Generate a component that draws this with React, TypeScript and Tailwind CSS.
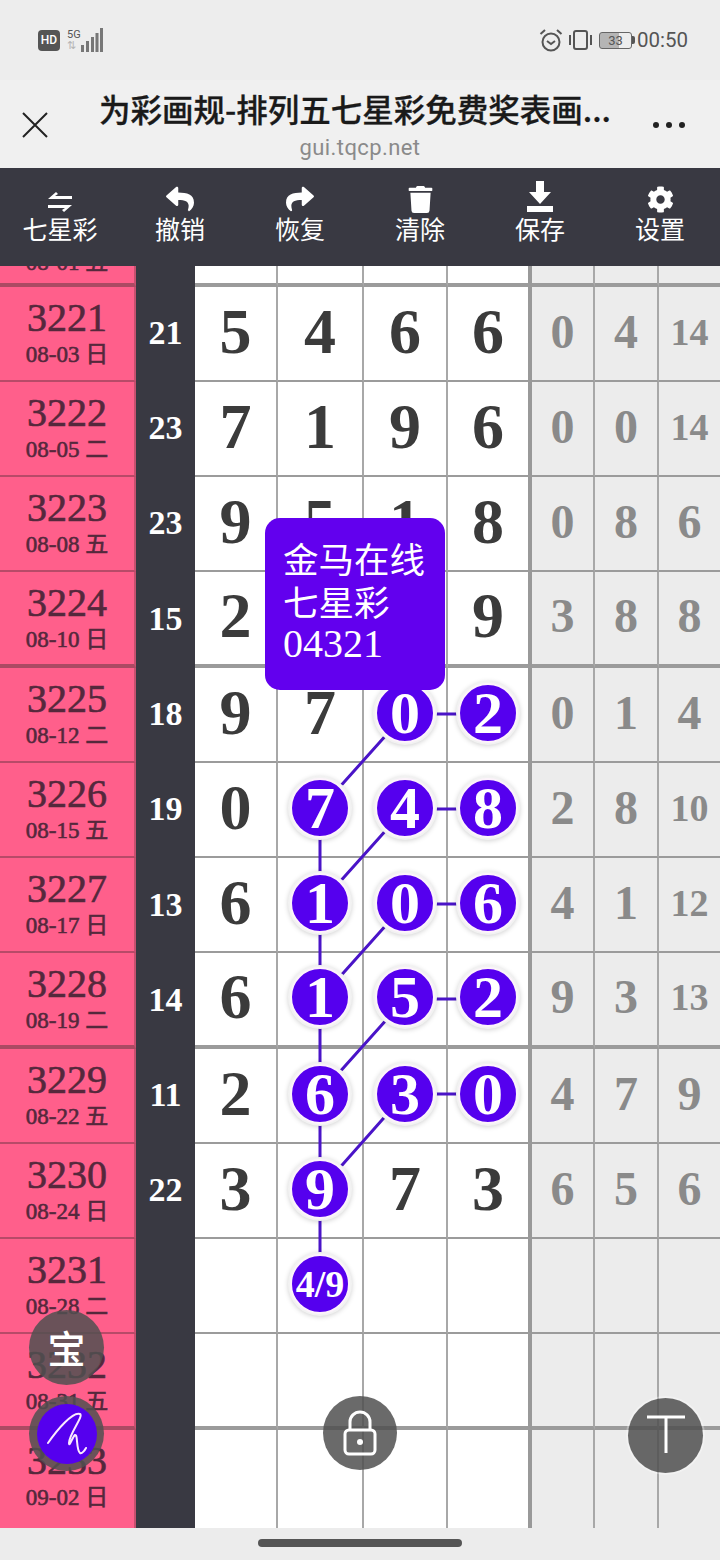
import React from "react";
import { FaReply, FaShare, FaTrash, FaCog } from "react-icons/fa";

const SERIF = "font-['Liberation_Serif','Noto_Sans_CJK_SC',serif]";
const CJK = "font-['Noto_Sans_CJK_SC','Noto_Sans',sans-serif]";

type Row = { id: string; date: string; n: string; d: (string | null)[]; g: string[]; balls?: number[]; thick?: boolean };

const rows: Row[] = [
  { id: "3221", date: "08-03 日", n: "21", d: ["5", "4", "6", "6"], g: ["0", "4", "14"] },
  { id: "3222", date: "08-05 二", n: "23", d: ["7", "1", "9", "6"], g: ["0", "0", "14"] },
  { id: "3223", date: "08-08 五", n: "23", d: ["9", "5", "1", "8"], g: ["0", "8", "6"] },
  { id: "3224", date: "08-10 日", n: "15", d: ["2", null, null, "9"], g: ["3", "8", "8"], thick: true },
  { id: "3225", date: "08-12 二", n: "18", d: ["9", "7", "0", "2"], g: ["0", "1", "4"], balls: [2, 3] },
  { id: "3226", date: "08-15 五", n: "19", d: ["0", "7", "4", "8"], g: ["2", "8", "10"], balls: [1, 2, 3] },
  { id: "3227", date: "08-17 日", n: "13", d: ["6", "1", "0", "6"], g: ["4", "1", "12"], balls: [1, 2, 3] },
  { id: "3228", date: "08-19 二", n: "14", d: ["6", "1", "5", "2"], g: ["9", "3", "13"], balls: [1, 2, 3], thick: true },
  { id: "3229", date: "08-22 五", n: "11", d: ["2", "6", "3", "0"], g: ["4", "7", "9"], balls: [1, 2, 3] },
  { id: "3230", date: "08-24 日", n: "22", d: ["3", "9", "7", "3"], g: ["6", "5", "6"], balls: [1] },
  { id: "3231", date: "08-28 二", n: "", d: [null, "4/9", null, null], g: ["", "", ""], balls: [1] },
  { id: "3232", date: "08-31 五", n: "", d: [null, null, null, null], g: ["", "", ""], thick: true },
  { id: "3233", date: "09-02 日", n: "", d: [null, null, null, null], g: ["", "", ""] },
];

const whiteW = ["w-[83px]", "w-[86px]", "w-[84px]", "w-[84px]"];
const grayW = ["w-[63px]", "w-[64px]", "w-[61px]"];

function Ball({ v }: { v: string }) {
  return (
    <div className={`relative z-20 flex h-[60px] w-[60px] items-center justify-center rounded-full border-[2px] border-[#fdf3fb] bg-[#5500ee] font-bold text-white shadow-[0_0_0_2px_#f2f2f2,0_1px_5px_2px_rgba(0,0,0,0.18)] ${SERIF} ${v.length > 1 ? "text-[38px]" : "text-[60px]"}`}>
      {v}
    </div>
  );
}

function TableRow({ r, last }: { r: Row; last: boolean }) {
  const hLine = last ? "" : r.thick ? "border-b-[4px]" : "border-b-[2px]";
  const h = last ? "h-[100px]" : r.thick ? "h-[95.5px]" : "h-[95.2px]";
  return (
    <div className={`flex ${h}`}>
      <div className={`box-border flex w-[136px] flex-col items-center pt-[7px] border-r-[2px] border-r-[#c8506f] bg-[#ff5f8b] text-[#55283c] ${hLine} ${r.thick ? "border-b-[#ab4a63]" : "border-b-[#b84a68]"} ${SERIF}`}>
        <div className="text-[40px] leading-[47px] [-webkit-text-stroke:0.6px_#55283c]">{r.id}</div>
        <div className="text-[23px] leading-[27px] whitespace-nowrap [-webkit-text-stroke:0.6px_#55283c]">{r.date}</div>
      </div>
      <div className={`box-border flex w-[59px] items-center justify-center bg-[#393942] pb-[3px] text-[34px] font-bold text-white ${SERIF}`}>{r.n}</div>
      {r.d.map((v, i) => (
        <div
          key={i}
          className={`box-border flex items-center justify-center bg-white pb-[3px] font-bold text-[#3b3b3b] ${whiteW[i]} ${hLine} border-b-[#9b9b9b] ${i === 3 ? "border-r-[4px] border-r-[#999999]" : "border-r-[2px] border-r-[#a8a8a8]"} ${SERIF} text-[64px] leading-none`}
        >
          {v !== null && (r.balls?.includes(i) ? <Ball v={v} /> : v)}
        </div>
      ))}
      {r.g.map((v, i) => (
        <div
          key={i}
          className={`box-border flex items-center justify-center bg-[#ececec] pb-[3px] font-bold text-[#8a8a8a] ${grayW[i]} ${hLine} border-b-[#9b9b9b] ${i < 2 ? "border-r-[2px] border-r-[#a8a8a8]" : ""} ${SERIF} ${v.length > 1 ? "text-[38px]" : "text-[48px]"} leading-none`}
        >
          {v}
        </div>
      ))}
    </div>
  );
}

function Tool({ icon, label }: { icon: React.ReactNode; label: string }) {
  return (
    <div className="flex w-[120px] flex-col items-center text-white">
      <div className="flex h-[32px] items-end justify-center">{icon}</div>
      <div className={`text-[25px] leading-[30px] ${CJK}`}>{label}</div>
    </div>
  );
}

export default function App() {
  const rowY = [714, 809, 904, 999, 1094, 1190, 1285];
  return (
    <div className="flex h-[1560px] w-[720px] flex-col overflow-hidden bg-[#ededed]">
      {/* status bar */}
      <div className="flex h-[80px] items-center justify-between pl-[38px] pr-[32px] text-[#555555]">
        <div className="flex items-center">
          <div className="flex h-[21px] w-[22px] items-center justify-center rounded-[4px] bg-[#555555] font-['Roboto',sans-serif] text-[12px] font-medium text-white">HD</div>
          <div className="ml-[7px] flex h-[23px] w-[15px] flex-col font-['Roboto',sans-serif] text-[11px] leading-[11px]">
            <span>5G</span>
            <span className="text-[#b5b5b5]">⇅</span>
          </div>
          <svg width="22" height="24" viewBox="0 0 22 24" className="-ml-[1px]">
            <rect x="0" y="17" width="3" height="7" fill="#777" />
            <rect x="5" y="13" width="3" height="11" fill="#777" />
            <rect x="10" y="9" width="3" height="15" fill="#777" />
            <rect x="14.5" y="5" width="3" height="19" fill="#777" />
            <rect x="19" y="0" width="3" height="24" fill="#777" />
          </svg>
        </div>
        <div className="flex items-center">
          <svg width="24" height="24" viewBox="0 0 24 24" fill="none" stroke="#555" strokeWidth="2">
            <circle cx="12" cy="14" r="8.5" />
            <path d="M8 13l4 3 4-3M1.5 6L6 2M22.5 6L18 2" />
          </svg>
          <svg width="26" height="22" viewBox="0 0 26 22" fill="none" stroke="#555" strokeWidth="2" className="ml-[5px]">
            <rect x="6" y="2" width="13" height="18" rx="2" />
            <path d="M2 6v10M23 6v10" />
          </svg>
          <div className="ml-[5px] flex h-[17px] w-[33px] items-center justify-center overflow-hidden rounded-[3px] border border-[#666666] bg-[linear-gradient(90deg,#b5b5b5_60%,#ededed_60%)] font-['Roboto',sans-serif] text-[13px] leading-none text-[#555555]">33</div>
          <div className="h-[8px] w-[3px] rounded-r-[2px] bg-[#555555]" />
          <div className="ml-[2px] font-['Roboto',sans-serif] text-[20.5px] leading-none text-[#555555]">00:50</div>
        </div>
      </div>

      {/* title bar */}
      <div className="flex h-[88px] items-start bg-[#f0f0f0]">
        <div className="flex h-[88px] w-[72px] shrink-0 items-center pl-[22px] pt-[2px]">
          <svg width="26" height="26" viewBox="0 0 26 26" stroke="#222" strokeWidth="2" fill="none"><path d="M1 1l24 24M25 1L1 25" /></svg>
        </div>
        <div className="flex flex-1 flex-col items-center pt-[9px]">
          <div className={`-ml-[10px] whitespace-nowrap text-[31.5px] font-medium leading-[38px] text-[#1a1a1a] [-webkit-text-stroke:0.3px_#1a1a1a] ${CJK}`}>为彩画规-排列五七星彩免费奖表画...</div>
          <div className="mt-[8px] font-['Roboto',sans-serif] text-[22px] leading-[26px] tracking-[0.4px] text-[#8a8a8a]">gui.tqcp.net</div>
        </div>
        <div className="flex h-[88px] w-[72px] shrink-0 items-center justify-start gap-[7px] pl-[5px] pt-[2px]">
          <span className="h-[6px] w-[6px] rounded-full bg-[#222222]" />
          <span className="h-[6px] w-[6px] rounded-full bg-[#222222]" />
          <span className="h-[6px] w-[6px] rounded-full bg-[#222222]" />
        </div>
      </div>

      {/* toolbar */}
      <div className="flex h-[98px] items-start bg-[#393942] pt-[13px]">
        <Tool
          label="七星彩"
          icon={
            <svg width="26" height="22" viewBox="0 0 26 22" fill="#fff">
              <path d="M9 1L1 8h24v-3H8l3-2zM17 21l8-7H1v3h17l-3 2z" />
            </svg>
          }
        />
        <Tool label="撤销" icon={<FaReply size={28} color="#fff" />} />
        <Tool label="恢复" icon={<FaShare size={28} color="#fff" />} />
        <Tool label="清除" icon={<FaTrash size={27} color="#fff" />} />
        <Tool
          label="保存"
          icon={
            <svg width="28" height="32" viewBox="0 0 28 32" fill="#fff">
              <path d="M10 0h8v11h7L14 23 3 11h7zM1 25h26v6H1z" />
            </svg>
          }
        />
        <Tool label="设置" icon={<FaCog size={27} color="#fff" />} />
      </div>

      {/* table */}
      <div className="relative h-[1262px] overflow-hidden">
        {/* partial row */}
        <div className="flex h-[20.5px]">
          <div className={`box-border flex w-[136px] justify-center overflow-hidden border-b-[4px] border-r-[2px] border-b-[#ab4a63] border-r-[#c8506f] bg-[#ff5f8b] text-[23px] leading-[26px] whitespace-nowrap text-[#55283c] [-webkit-text-stroke:0.6px_#55283c] ${SERIF}`}>
            <div className="-mt-[16px]">08-01 五</div>
          </div>
          <div className="w-[59px] bg-[#393942]" />
          {whiteW.map((w, i) => (
            <div key={i} className={`box-border border-b-[4px] border-b-[#9b9b9b] bg-white ${w} ${i === 3 ? "border-r-[4px] border-r-[#999999]" : "border-r-[2px] border-r-[#a8a8a8]"}`} />
          ))}
          {grayW.map((w, i) => (
            <div key={i} className={`box-border border-b-[4px] border-b-[#9b9b9b] bg-[#ececec] ${w} ${i < 2 ? "border-r-[2px] border-r-[#a8a8a8]" : ""}`} />
          ))}
        </div>
        {rows.map((r, i) => (
          <TableRow key={r.id} r={r} last={i === rows.length - 1} />
        ))}

        {/* connecting lines */}
        <svg className="absolute inset-0 z-10 h-[1262px] w-[720px]" viewBox="0 266 720 1262" fill="none" stroke="#4a14c8" strokeWidth="3">
          <path d={`M320 ${rowY[1]}V${rowY[6]}`} />
          {rowY.slice(0, 5).map((y, i) => (
            <path key={y} d={`M405 ${y}L320 ${rowY[i + 1]}M405 ${y}H488`} />
          ))}
        </svg>

        {/* tooltip */}
        <div className={`absolute left-[265px] top-[252px] z-30 flex h-[172px] w-[180px] flex-col rounded-[15px] bg-[#6200ee] pl-[18px] pt-[18px] text-white ${CJK}`}>
          <div className="text-[35.5px] leading-[43px]">金马在线</div>
          <div className="text-[35.5px] leading-[43px]">七星彩</div>
          <div className={`text-[40px] leading-[43px] ${SERIF}`}>04321</div>
        </div>

        {/* floating buttons */}
        <div className={`absolute left-[29px] top-[1044px] z-30 flex h-[75px] w-[75px] items-center justify-center rounded-full bg-[rgba(80,80,80,0.85)] pb-[2px] text-[38px] font-medium text-white ${CJK}`}>宝</div>
        <div className="absolute left-[29px] top-[1130px] z-30 flex h-[75px] w-[75px] items-center justify-center rounded-full bg-[rgba(80,80,80,0.85)]">
          <div className="flex h-[60px] w-[60px] items-center justify-center rounded-full bg-[#5500ee]">
            <svg width="44" height="44" viewBox="0 0 44 44" fill="none" stroke="#fbe9ff" strokeWidth="2" strokeLinecap="round" strokeLinejoin="round">
              <path d="M3 31C12 18 28-1 35 2C39 4 24 22 24 31C24 36 28 24 30 23C33 22 31 38 35 41C37 42 40 38 41 36" />
            </svg>
          </div>
        </div>
        <div className="absolute left-[323px] top-[1130px] z-30 flex h-[74px] w-[74px] items-center justify-center rounded-full bg-[rgba(80,80,80,0.85)]">
          <svg width="34" height="46" viewBox="0 0 34 46" fill="none" stroke="#fff" strokeWidth="3">
            <path d="M7 20v-8a10 10 0 0 1 20 0v8" />
            <rect x="2" y="20" width="30" height="24" rx="4" />
            <circle cx="17" cy="32" r="3" fill="#fff" stroke="none" />
          </svg>
        </div>
        <div className="absolute left-[628px] top-[1132px] z-30 flex h-[75px] w-[75px] items-center justify-center rounded-full bg-[rgba(80,80,80,0.85)] shadow-[0_0_0_2px_rgba(255,255,255,0.3)]">
          <svg width="40" height="40" viewBox="0 0 40 40" fill="none" stroke="#fff" strokeWidth="3" className="-mt-[6px]">
            <path d="M1 4h38M20 4v36" />
          </svg>
        </div>
      </div>

      {/* bottom bar */}
      <div className="flex h-[32px] items-start justify-center bg-[#ececec] pt-[11px]">
        <div className="h-[8px] w-[204px] rounded-full bg-[#555555]" />
      </div>
    </div>
  );
}
